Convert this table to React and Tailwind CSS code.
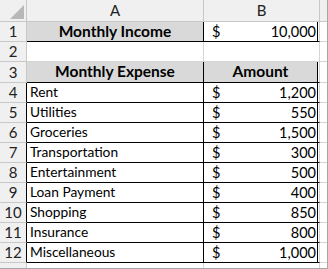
import React from "react";

const data = [
  ["Rent", "1,200"],
  ["Utilities", "550"],
  ["Groceries", "1,500"],
  ["Transportation", "300"],
  ["Entertainment", "500"],
  ["Loan Payment", "400"],
  ["Shopping", "850"],
  ["Insurance", "800"],
  ["Miscellaneous", "1,000"],
];

function RowHead({ n, dark }) {
  return (
    <div
      className={`w-[27px] shrink-0 h-full bg-[#f0f0f0] border-r border-b border-b-[#c8c8c8] flex items-center justify-center text-[15px] text-[#222] ${
        dark ? "border-r-black" : "border-r-[#c8c8c8]"
      }`}
    >
      {n}
    </div>
  );
}

function Money({ v }) {
  return (
    <div className="w-[116px] shrink-0 h-full border-b border-black border-r border-r-[#d4d4d4] flex">
      <div className="w-[114px] h-full border-r border-black flex items-center justify-between pl-[8px] pr-[1px] text-[14.5px]">
        <span>$</span>
        <span>{v}</span>
      </div>
    </div>
  );
}

function Filler({ cls = "" }) {
  return <div className={`flex-1 h-full border-b border-[#d4d4d4] ${cls}`} />;
}

export default function App() {
  return (
    <div
      className="w-[328px] h-[269px] bg-white border-r border-b border-[#a6a6a6] overflow-hidden text-black"
      style={{ fontFamily: "Lato, 'Liberation Sans', sans-serif" }}
    >
      {/* column header */}
      <div className="flex h-[22px] bg-[#f0f0f0] text-[15px] text-[#222]">
        <div className="w-[27px] shrink-0 h-full border-r border-b border-[#c8c8c8] flex items-end justify-end pr-[2px] pb-[2px]">
          <svg width="14" height="14" viewBox="0 0 14 14">
            <polygon points="14,0 14,14 0,14" fill="#b8b8b8" />
          </svg>
        </div>
        <div className="w-[177px] shrink-0 h-full border-r border-b border-[#c8c8c8] flex items-center justify-center">
          A
        </div>
        <div className="w-[116px] shrink-0 h-full border-r border-b border-[#c8c8c8] flex items-center justify-center">
          B
        </div>
        <div className="flex-1 h-full border-b border-[#c8c8c8]" />
      </div>

      {/* row 1 */}
      <div className="flex h-[20px]">
        <RowHead n={1} />
        <div className="w-[177px] shrink-0 h-full bg-[#d9d9d9] border-r border-b border-black flex items-center justify-center font-bold text-[15.5px]">
          Monthly Income
        </div>
        <Money v="10,000" />
        <Filler />
      </div>

      {/* row 2 */}
      <div className="flex h-[20px]">
        <RowHead n={2} />
        <div className="w-[177px] shrink-0 h-full border-r border-b border-[#d4d4d4]" />
        <div className="w-[116px] shrink-0 h-full border-r border-b border-[#d4d4d4]" />
        <Filler />
      </div>

      {/* row 3 */}
      <div className="flex h-[21px]">
        <RowHead n={3} />
        <div className="w-[177px] shrink-0 h-full bg-[#d9d9d9] border-r border-b border-black flex items-center justify-center font-bold text-[15.5px]">
          Monthly Expense
        </div>
        <div className="w-[116px] shrink-0 h-full border-b border-black border-r border-r-[#d4d4d4] flex">
          <div className="w-[114px] h-full bg-[#d9d9d9] border-r border-black flex items-center justify-center font-bold text-[15.5px]">
            Amount
          </div>
        </div>
        <Filler />
      </div>

      {data.map(([label, v], i) => (
        <div key={label} className="flex h-[20px]">
          <RowHead n={i + 4} dark />
          <div className="w-[177px] shrink-0 h-full border-r border-b border-black flex items-center pl-[3px] text-[13.75px]">
            {label}
          </div>
          <Money v={v} />
          <Filler />
        </div>
      ))}

      {/* row 13 partial */}
      <div className="flex h-[6px]">
        <div className="w-[27px] shrink-0 h-full bg-[#f0f0f0] border-r border-[#c8c8c8]" />
        <div className="w-[177px] shrink-0 h-full border-r border-[#d4d4d4]" />
        <div className="w-[116px] shrink-0 h-full border-r border-[#d4d4d4]" />
        <div className="flex-1 h-full" />
      </div>
    </div>
  );
}
